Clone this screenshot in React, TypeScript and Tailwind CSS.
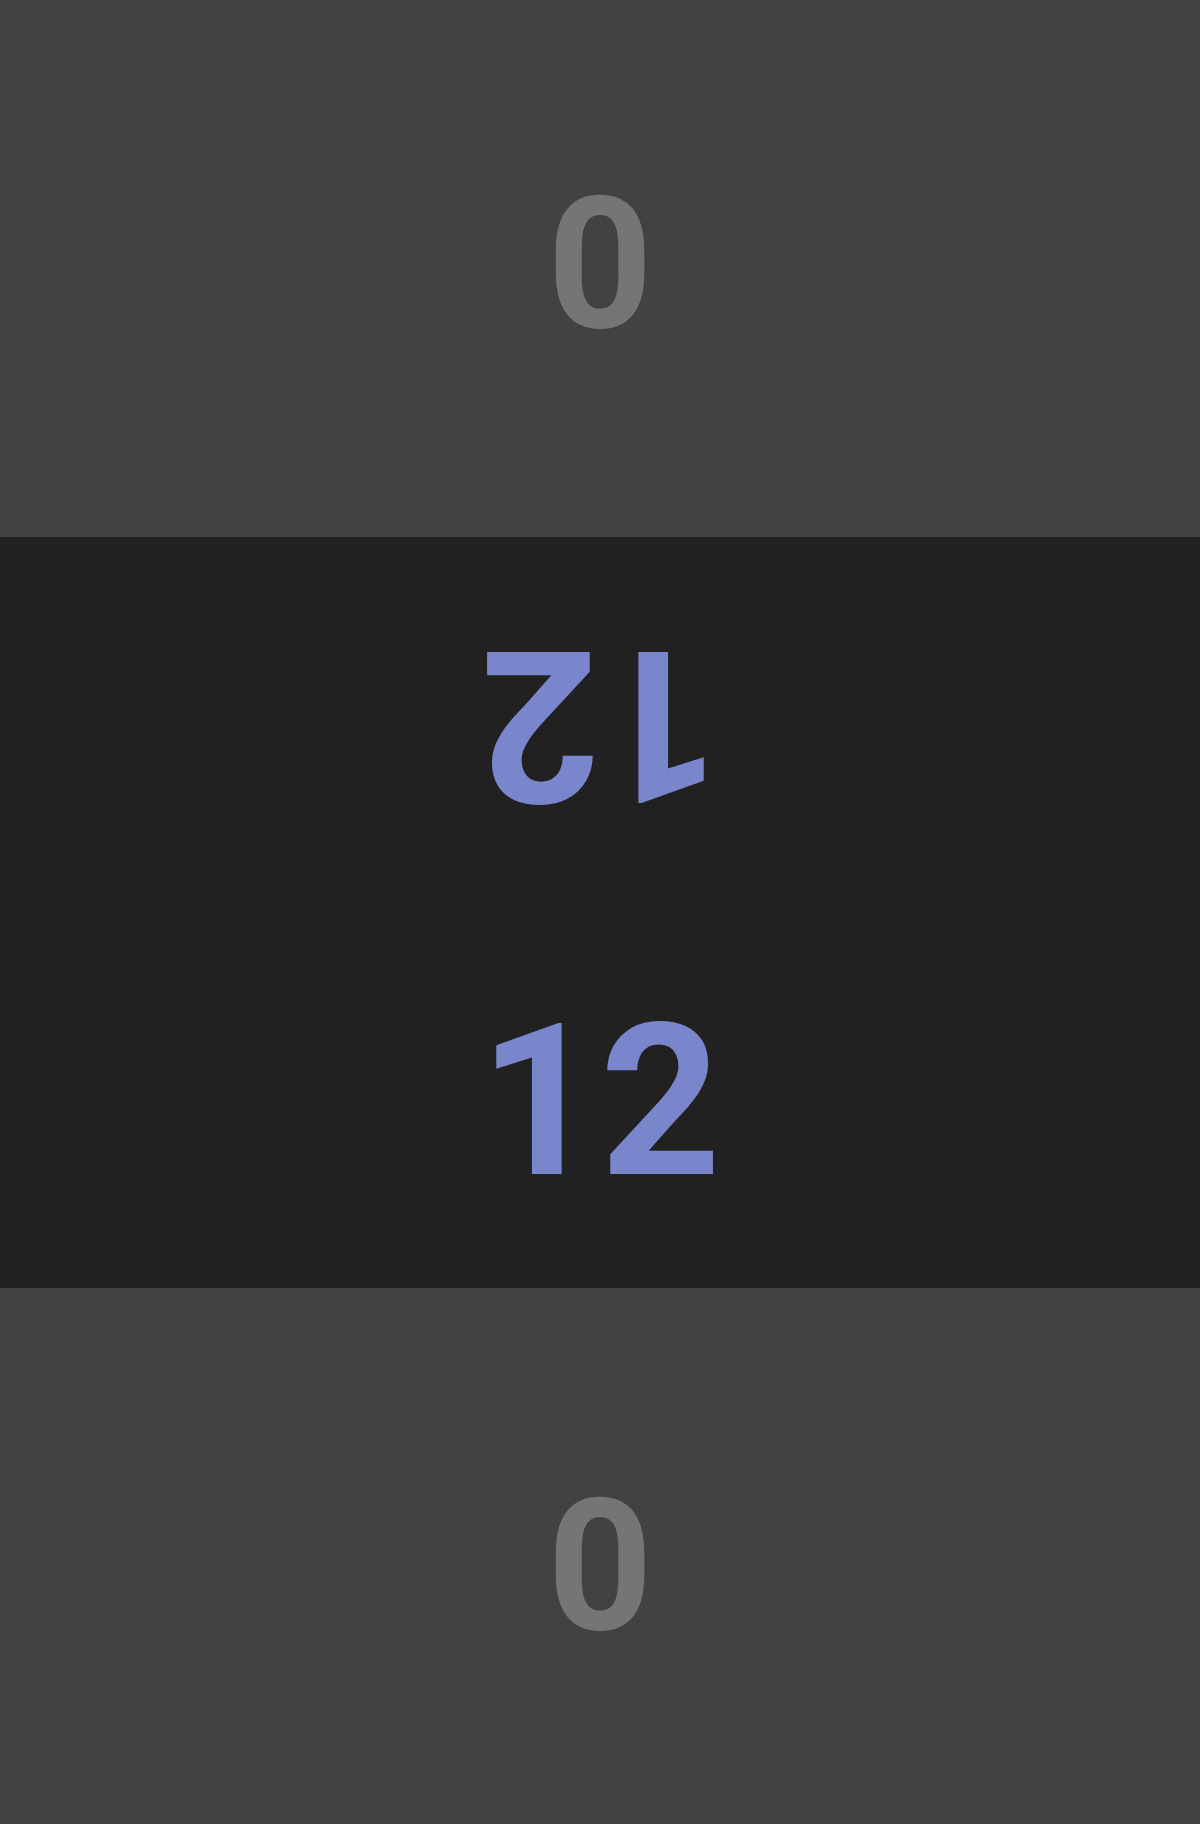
export default function App() {
  return (
    <div className="flex h-[1824px] w-full flex-col font-['Roboto',sans-serif] font-bold">
      <div className="flex h-[537px] items-center justify-center bg-[#424242] pb-[10px]">
        <span className="text-[184px] leading-none text-[#757575]">0</span>
      </div>

      <div className="flex h-[751px] flex-col bg-[#212121]">
        <div className="flex flex-1 rotate-180 items-center justify-center pt-[6px]">
          <span className="text-[211px] leading-none text-[#7986cb]">12</span>
        </div>
        <div className="flex flex-1 items-center justify-center pt-[2px]">
          <span className="text-[211px] leading-none text-[#7986cb]">12</span>
        </div>
      </div>

      <div className="flex flex-1 items-center justify-center bg-[#424242] pt-[19px]">
        <span className="text-[184px] leading-none text-[#757575]">0</span>
      </div>
    </div>
  );
}
